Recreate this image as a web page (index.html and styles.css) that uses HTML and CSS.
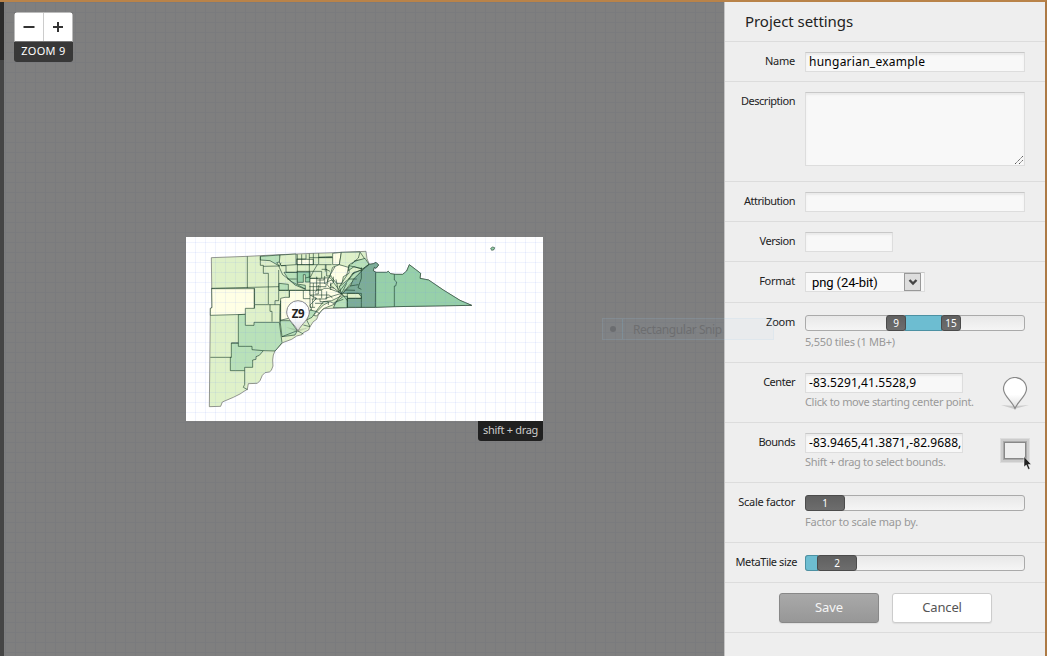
FILE: index.html
```
<!DOCTYPE html>
<html lang="en">
<head>
<meta charset="utf-8">
<title>Project settings</title>
<link rel="stylesheet" href="styles.css">
</head>
<body>
<div class="app">
<main class="map">
  <div class="zoomer">
    <div class="zoom-buttons">
      <button class="zb"><svg width="28" height="28"><path d="M8.500 14h11" stroke="#333" stroke-width="2"/></svg></button>
      <button class="zb"><svg width="28" height="28"><path d="M9 14h10M14 9v10" stroke="#333" stroke-width="2"/></svg></button>
    </div>
    <div class="zoom-label">ZOOM 9</div>
  </div>
  <div class="bounds">
    <svg width="357" height="184" viewBox="18 21 1071 552">
      <g stroke="#183a28" stroke-opacity=".72" stroke-width="2.500" stroke-linejoin="round">
        <path class="c2" stroke="#555" d="M94 83L202 79 300 74 400 70 460 68 558 64 561 86 568 103 580 101 588 97 596 105 588 115 583 112 580 122 590 127 620 127 625 124 632 131 645 133 668 133 680 123 688 104 722 130 720 145 746 150 790 180 840 211 875 226 643 230 586 232 500 233 433 236 426 240 415 255 410 268 400 275 390 290 386 300 370 308 366 314 350 318 335 328 308 338 293 354 285 363 280 375 278 390 279 408 274 421 268 426 255 428 247 436 240 452 232 460 205 461 202 478 192 484 180 492 160 502 127 516 122 529 88 530 91 235 96 233z"/>
        <path class="c1" d="M95 176H223V235H196V253L91 256V235L96 233z"/>
        <path class="c3" d="M175 254L196 253V286H222V277H298L306 338 292 355 285 363 250 362 238 376 228 380 228 388 218 390V412H194V422H151V382H154V339H175z"/>
        <path class="c3" d="M241 79L300 75 302 95 290 98 298 108 270 92 241 90zM297 160L325 163 325 181H297zM300 272H330L352 302 345 315 306 320z"/>
        <path class="c2" d="M300 75L348 72V104L303 107 298 96z"/>
        <path class="c3" d="M312 127H352V162L376 166V178L345 165 325 147z"/>
        <path class="c4" d="M352 126H390V156H376V134H370V157H352z"/>
        <path class="c1" d="M302 205L315 202 328 202 328 181H390V195L408 196 405 220 390 242 370 255 300 271z"/>
        <path class="c1" d="M350 88H400V104H350zM416 82L458 80V70L484 67 478 104 458 104V82H416zM390 145L420 145 450 143 462 156 450 165 475 185 488 196 455 212 430 215 408 244 398 248 390 225 410 205 390 195z"/>
        <path class="c1" d="M450 136L458 112 478 104 508 104 507 130 490 140 486 160 470 160zM400 256L430 225 450 215 465 222 430 236 410 258z"/>
        <path class="c2" d="M484 67L540 66 555 88 524 92 522 108 505 112 478 104z"/>
        <path class="c3" d="M524 94L555 85 567 103 548 117 522 110 505 122 508 104zM478 170L505 148 520 128 548 119 485 193zM490 199H502V233H460L470 214zM390 240L408 244 396 262 380 270z"/>
        <path class="c5" d="M568 103L580 101 588 97 596 105 588 115 583 112 580 122 587 127 586 232H502V205H544V200L535 190H488L512 167 520 148 548 120z"/>
        <path class="c4" d="M587 127H620L625 124 632 131 645 133 668 133 680 123 688 104 722 130 720 145 746 150 790 180 840 211 875 226 643 230 587 232z"/>
        <path class="c4" d="M932 55l6-4 6 2-2 6-7 2z"/>
        <g fill="none">
          <path d="M202 79V174M94 175L297 170M241 79V106H250V130H265V170M265 170V222M223 222V174M296 120V212H285V224H223M223 224V235M270 224V244H276V275M285 224H300V277M91 382H154M154 339H175V349H216V359L250 362M194 422V463L190 472 203 479M250 109L296 108 308 134 335 155 378 178M303 107H318V127H352V73M298 110L303 98M297 181H390M328 181V202M302 212V271"/>
          <path d="M350 104H455M350 87H378V73M388 71V145M400 70V104M416 70V102M436 104V125M350 124H425V145M376 144L392 140 400 124 412 104M365 73V104M388 83H458M322 147H350M390 159H440L450 136 465 110M390 145H415M400 159V206M410 140V180M420 145V175M434 138V162M388 170H438V160M388 181H425V205M392 195H448M395 207H440V184M390 195V232H405M405 220H430M443 145V162M415 165V192H405M452 158V180M460 140V155M468 148L476 187 525 125M485 190L455 150 443 155M485 190L445 175H430M485 190L435 205M485 190L465 220M485 190L500 160M485 190L502 212M478 170L500 137 507 105M515 103L535 84 540 67M508 107L548 117 568 102M505 147H530M515 133L545 119M502 233V190H544V232M544 112V145L534 173 544 178M502 205H544M643 133V150L650 156 647 168H643V230M493 180L525 181M510 168L535 164M461 218L490 208M306 320L352 302M352 302L370 312M370 285L390 290"/>
          <path d="M425 118H440V138H455M412 150H432V145M405 188L412 178H430M420 205V215H445V225M398 207V232M440 162L448 172 462 174M448 195L458 205M370 182V206H390M438 104V118L450 124M380 270L390 290M408 244L418 250"/>
        </g>
      </g>
      <defs><linearGradient id="pin" x2="0" y2="1"><stop offset=".55" stop-color="#fff"/><stop offset="1" stop-color="#ddd"/></linearGradient></defs>
      <path d="M318 292L354 306 390 292 354 298z" fill="#000" opacity=".12"/>
      <path d="M354 303C343 281 320 268 320 246A34 34 0 1 1 388 246C388 268 365 281 354 303z" fill="url(#pin)" stroke="#888" stroke-width="3"/>
    </svg>
    <div class="grid"></div>
    <span class="pin-label">Z9</span>
    <span class="drag">shift + drag</span>
  </div>
  <div class="snip"><span class="snip-dot"><i></i></span><span class="snip-text">Rectangular Snip</span></div>
</main>
<aside class="panel">
  <h1>Project settings</h1>
  <div class="row h40"><label class="short">Name</label><div class="field"><div class="input wide"><span class="v1">hungarian_example</span></div></div></div>
  <div class="row h100"><label>Description</label><div class="field"><div class="input wide area"><svg width="8" height="8"><path d="M0 8L8 0M4 8L8 4" stroke="#555" stroke-dasharray="1.400 .6"/></svg></div></div></div>
  <div class="row h40"><label>Attribution</label><div class="field"><div class="input wide"></div></div></div>
  <div class="row h40"><label>Version</label><div class="field"><div class="input small"></div></div></div>
  <div class="row h41"><label class="short">Format</label><div class="field"><div class="input select"><span>png (24-bit)</span><b><svg width="16" height="16"><path d="M4.500 6l3.500 3.500L11.500 6" fill="none" stroke="#444" stroke-width="2.400"/></svg></b></div></div></div>
  <div class="row h60"><label class="short">Zoom</label><div class="field"><div class="slider"><i class="space81"></i><b class="knob k20">9</b><i class="fill f35"></i><b class="knob k20">15</b></div><p class="t1">5,550 tiles (1 MB+)</p></div></div>
  <div class="row h60"><label>Center</label><div class="field"><div class="input mid"><span class="v2">-83.5291,41.5528,9</span></div><p class="t2">Click to move starting center point.</p></div>
    <svg class="marker" width="32" height="34"><path d="M2 28L15 32 30 28 16 29z" fill="#000" opacity=".15"/><path d="M16 31.500C13 24 4.500 19 4.500 12A11.500 11.500 0 0 1 27.500 12C27.500 19 19 24 16 31.500z" fill="url(#pin)" stroke="#888" stroke-width="1.200"/></svg></div>
  <div class="row h60"><label>Bounds</label><div class="field"><div class="input mid"><span class="v3">-83.9465,41.3871,-82.9688,</span></div><p class="t2">Shift + drag to select bounds.</p></div>
    <div class="box-icon"><i></i><svg class="cursor" width="9" height="14"><path d="M1 .5V11L3.300 9 5.300 13.500 7 12.700 5.200 8.500H8.300z" fill="#222" stroke="#fff" stroke-width=".5"/></svg></div></div>
  <div class="row h60"><label class="short">Scale factor</label><div class="field"><div class="slider"><b class="knob k40">1</b></div><p class="t4">Factor to scale map by.</p></div></div>
  <div class="row h40"><label class="meta">MetaTile size</label><div class="field"><div class="slider"><i class="fill f12"></i><b class="knob k40">2</b></div></div></div>
  <div class="row actions"><button class="btn save">Save</button><button class="btn cancel">Cancel</button></div>
</aside>
</div>
</body>
</html>
```
FILE: styles.css
```
*{box-sizing:border-box}
body{margin:0;overflow:hidden;font-family:"Noto Sans",sans-serif;font-size:11px;color:#222}
button{font:inherit;padding:0;border:0}
.app{display:flex;width:1047px;height:656px;border-top:2px solid #b98349;border-right:2px solid #ad7a45}
.map{position:relative;width:724px;border-left:4px solid;border-image:linear-gradient(#2b2b2b 59px,#454545 59px) 1;background-color:#7f7f7f;background-image:linear-gradient(90deg,#7a7b7e 1px,transparent 1px),linear-gradient(#7a7b7e 1px,transparent 1px);background-size:10px 10px;background-position:1px 0}
.zoomer{position:absolute;left:10px;top:10px;width:59px;border-radius:3px;background:#383838;overflow:hidden}
.zoom-buttons{display:flex;gap:1px;height:30px;border:1px solid #bbb;border-bottom:1px solid #777;border-radius:3px 3px 0 0;background:#ccc}
.zb{width:28px;height:28px;background:#fff}
.zb svg{display:block}
.zoom-label{height:20px;line-height:17px;text-align:center;color:#fff;font-size:11px;letter-spacing:.3px}
.bounds{position:absolute;left:182px;top:235px;width:357px;height:184px;background:#fff}
.bounds svg{display:block}
.c1{fill:#ffffe5}.c2{fill:#dff1c9}.c3{fill:#b9e1b9}.c4{fill:#97d0a9}.c5{fill:#7dad97}
.grid{position:absolute;inset:0;background-image:linear-gradient(90deg,rgba(110,140,240,.1) 1px,transparent 1px),linear-gradient(rgba(110,140,240,.1) 1px,transparent 1px);background-size:10px 10px;background-position:9px 5px}
.pin-label{position:absolute;left:99px;top:68px;width:26px;text-align:center;font-weight:bold;font-size:11.500px;line-height:17px;letter-spacing:-.4px}
.drag{position:absolute;right:0;top:184px;width:65px;height:20px;line-height:18px;text-align:center;background:#202020;color:#ccc;border-radius:0 0 3px 3px;white-space:nowrap;font-size:11px;letter-spacing:-.3px}
.snip{position:absolute;z-index:2;left:598px;top:316px;width:172px;height:22px;display:flex;border:1px solid rgba(160,205,235,.12);background:rgba(150,190,230,.05)}
.snip-dot{width:20px;border-right:1px solid rgba(120,190,230,.2);display:flex;align-items:center;justify-content:center}
.snip-dot i{width:6px;height:6px;border-radius:3px;background:#6b6d70}
.snip-text{margin-left:10px;line-height:21px;font-size:12px;color:#6d6e70;white-space:nowrap;letter-spacing:-.44px}
.panel{width:321px;background:#eee;border-left:1px solid #c4c4c4}
h1{margin:0;height:40px;padding-left:20px;font-size:15px;font-weight:400;line-height:39px;letter-spacing:-.05px;border-bottom:1px solid #dcdcdc}
.row{display:flex;position:relative;padding-top:10px;border-bottom:1px solid #dcdcdc}
.h40{height:40px}.h41{height:41px}.h60{height:60px}.h100{height:100px}
label{width:70px;margin-right:10px;text-align:right;line-height:18px;white-space:nowrap;letter-spacing:-.47px}
label.short{letter-spacing:-.25px}
.meta{width:72px;margin-right:8px;letter-spacing:-.4px}
.field{width:220px}
.input{height:20px;border:1px solid #ddd;border-top-color:#c8c8c8;background:#f8f8f8;box-shadow:inset 0 2px 2px #eaeaea;color:#000;font-size:12px;line-height:18px;padding-left:3px;white-space:nowrap;overflow:hidden}
.v1{letter-spacing:.25px}.v2,.v3{letter-spacing:.07px}
.wide{width:220px}.small{width:88px}.mid{width:158px}
.area{height:74px;display:flex;justify-content:flex-end;align-items:flex-end;padding:1px}
.select{width:120px;display:flex;justify-content:space-between;padding:0 3px 0 6px;font-family:Roboto,sans-serif;font-size:13px;line-height:20px;letter-spacing:-.1px;box-shadow:none}
.select b{width:17px;height:18px;border:1px solid #999;background:#ddd}
.select svg{display:block}
.slider{display:flex;height:16px;margin-top:2px;border:1px solid #aaa;border-radius:3px;background:linear-gradient(#e8e8e8,#f5f5f5)}
.slider i{display:block;height:14px}
.space81{width:80px}
.fill{background:#6dbdd1;box-shadow:0 0 0 1px #4c91a3}
.f35{width:35px}.f12{width:11px;border-radius:2px 0 0 2px}
.knob{position:relative;height:16px;margin-top:-1px;line-height:14px;border:1px solid #4b4b4b;border-radius:3px;background:linear-gradient(#606060,#6d6d6d);color:#fff;font-weight:400;font-size:10px;text-align:center}
.k20{width:20px}.k40{width:40px}.knob:first-child{margin-left:-1px}
p{margin:4px 0 0;color:#999;line-height:14px;white-space:nowrap}
.t1,.t4{letter-spacing:-.22px}
.t2{margin-top:2px;letter-spacing:-.33px}
.marker{position:absolute;left:274px;top:14px}
.box-icon{position:absolute;left:275px;top:15px;width:30px;height:25px;padding:3px;background:#ccc;border:1px solid #ddd}
.box-icon i{display:block;height:17px;border:1px solid #888;background:#eee;box-shadow:0 0 0 1px #aaa}
.cursor{position:absolute;left:22px;top:17px}
.actions{height:50px;padding-left:54px;gap:13px}
.btn{width:100px;height:30px;border:1px solid #ccc;border-radius:3px;font-size:13px;line-height:25px;padding-bottom:2px;letter-spacing:-.15px;background:#fff;color:#555;box-shadow:0 1px 1px #ddd}
.save{border-color:#888;background:linear-gradient(#a9a9a9,#979797);color:#f5f5f5}
```
